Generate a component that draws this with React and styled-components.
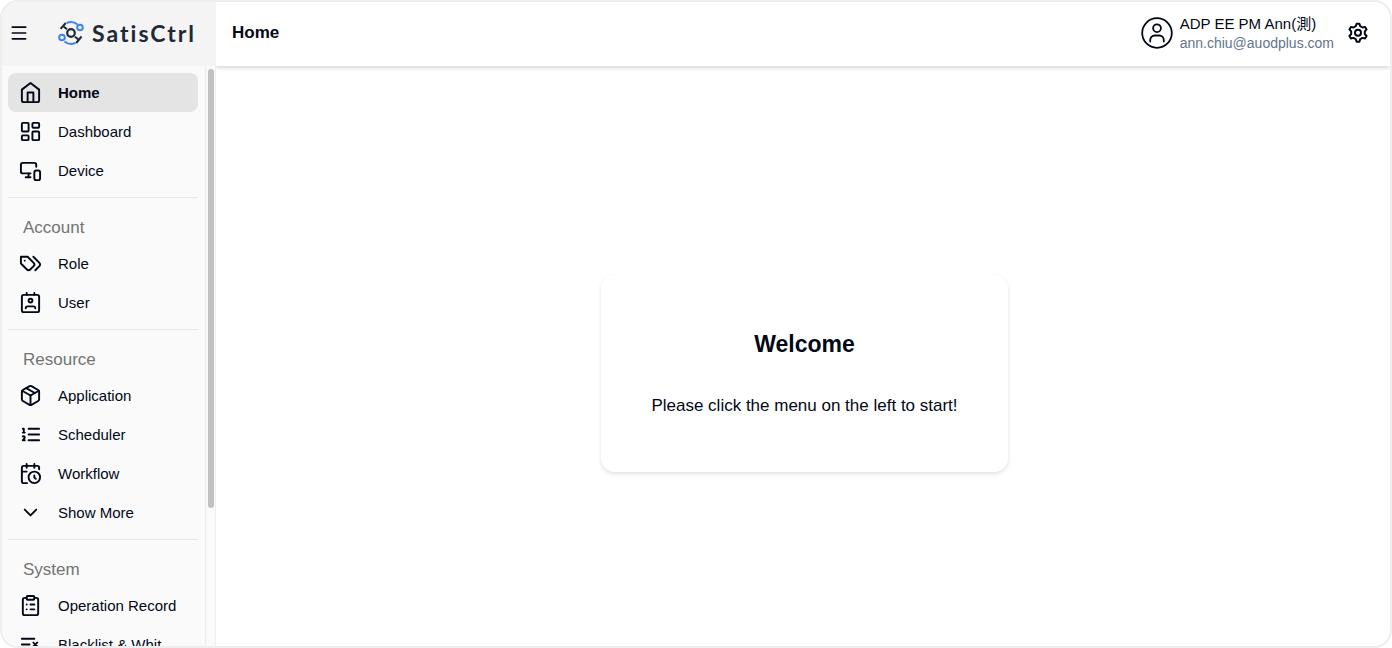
import React from 'react';
import styled, { createGlobalStyle } from 'styled-components';
import {
    LayoutDashboard, MonitorSmartphone, ChevronDown, ClipboardList, Menu, Package,
} from 'lucide-react';

// icon drawings that are not in the package in this shape
const Svg = ({ size = 23, children }) => (
    <svg width={size} height={size} viewBox="0 0 24 24" fill="none" stroke="currentColor" strokeWidth="2" strokeLinecap="round" strokeLinejoin="round" aria-hidden="true">
        {children}
    </svg>
)

const HomeIcon = () => (
    <Svg>
        <path d="m3 9 9-7 9 7v11a2 2 0 0 1-2 2H5a2 2 0 0 1-2-2z" />
        <path d="M9 22V12h6v10" />
    </Svg>
)

const TagsIcon = () => (
    <Svg>
        <path d="M9 5H2v7l6.290 6.290c.94.94 2.480.94 3.420 0l3.580-3.580c.94-.94.94-2.480 0-3.420L9 5Z" />
        <path d="M6 9.010V9M15 5l6.300 6.300a2.400 2.400 0 0 1 0 3.400L17 19" />
    </Svg>
)

const ContactIcon = () => (
    <Svg>
        <path d="M17 18a2 2 0 0 0-2-2H9a2 2 0 0 0-2 2M8 2v2M16 2v2" />
        <rect x="3" y="4" width="18" height="18" rx="2" />
        <circle cx="12" cy="10" r="2" />
    </Svg>
)

const OrderedIcon = () => (
    <Svg>
        <path d="M10 6h11M10 12h11M10 18h11M4 6h1v4M4 10h2M6 18H4c0-1 2-2 2-3s-1-1.500-2-1" />
    </Svg>
)

const CalendarClockIcon = () => (
    <Svg>
        <path d="M21 7.500V6a2 2 0 0 0-2-2H5a2 2 0 0 0-2 2v14a2 2 0 0 0 2 2h3.500" />
        <path d="M16 2v4M8 2v4M3 10h5M17.500 17.500 16 16.250V14" />
        <circle cx="16" cy="16" r="6" />
    </Svg>
)

const ListXIcon = () => (
    <Svg>
        <path d="M11 12H3M16 6H3M16 18H3M19 10l-4 4M15 10l4 4" />
    </Svg>
)

const GearIcon = () => (
    <Svg size={24}>
        <path d="M9.800 5.200 10.600 2.700h2.800l.8 2.500 2.300 1.300 2.600-.6 1.500 2.500-1.800 2v2.600l1.800 2-1.500 2.500-2.600-.6-2.300 1.300-.8 2.500h-2.800l-.8-2.500-2.300-1.300-2.600.6L3.400 15l1.800-2v-2.600l-1.800-2 1.500-2.500 2.600.6z" />
        <circle cx="12" cy="11.700" r="3" />
    </Svg>
)

const AvatarIcon = () => (
    <svg width="32" height="32" viewBox="0 0 32 32" fill="none" stroke="currentColor" strokeWidth="1.800" strokeLinecap="round" aria-hidden="true">
        <circle cx="16" cy="16" r="14.800" />
        <circle cx="16" cy="11.200" r="3.900" />
        <path d="M9.200 24.500v-1.500a4.500 4.500 0 0 1 4.500-4.500h4.600a4.500 4.500 0 0 1 4.500 4.500v1.500" />
    </svg>
)

const LogoMark = () => (
    <svg width="28" height="26" viewBox="0 0 28 26" fill="none" strokeWidth="2" aria-hidden="true">
        <g stroke="#3b82f6">
            <path d="M9.500 3.200C13 1.600 17.500 2 20.500 4.500" />
            <circle cx="23" cy="7.500" r="2.800" />
            <path d="M18.500 22.800C15 24.400 10.500 24 7.500 21.500" />
            <circle cx="5" cy="17.500" r="2.800" />
        </g>
        <g stroke="#1f2937">
            <circle cx="14" cy="13" r="3.800" strokeWidth="2.200" />
            <path d="M3.500 8.800 8.800 3M6 6l4 3.200M24.500 16.500 19.200 23M22 20l-4-3.200" />
        </g>
    </svg>
)

const groups = [
    {
        items: [
            { label: 'Home', icon: HomeIcon, active: true },
            { label: 'Dashboard', icon: LayoutDashboard },
            { label: 'Device', icon: MonitorSmartphone },
        ],
    },
    {
        title: 'Account',
        items: [
            { label: 'Role', icon: TagsIcon },
            { label: 'User', icon: ContactIcon },
        ],
    },
    {
        title: 'Resource',
        items: [
            { label: 'Application', icon: Package },
            { label: 'Scheduler', icon: OrderedIcon },
            { label: 'Workflow', icon: CalendarClockIcon },
            { label: 'Show More', icon: ChevronDown, more: true },
        ],
    },
    {
        title: 'System',
        items: [
            { label: 'Operation Record', icon: ClipboardList },
            { label: 'Blacklist & Whit...', icon: ListXIcon },
        ],
    },
]

function Sidebar() {
    return (
        <SideColumn>
            <Brand>
                <IconButton type="button" aria-label="Toggle menu"><Menu size={20} /></IconButton>
                <LogoLink href="#home">
                    <LogoMark />
                    <LogoText>SatisCtrl</LogoText>
                </LogoLink>
            </Brand>
            <SideBody>
                <Nav>
                    {groups.map((group, i) => (
                        <Group key={i}>
                            {group.title && <GroupTitle>{group.title}</GroupTitle>}
                            {group.items.map(({ label, icon: Icon, active, more }) => (
                                <NavItem key={label} as={more ? 'button' : 'a'} href={more ? undefined : '#' + label} $active={active}>
                                    <Icon size={23} />
                                    <span>{label}</span>
                                </NavItem>
                            ))}
                        </Group>
                    ))}
                </Nav>
                <Track><Thumb /></Track>
            </SideBody>
        </SideColumn>
    )
}

export default function App() {
    return (
        <>
            <GlobalStyle />
            <Frame>
                <Sidebar />
                <Content>
                    <TopBar>
                        <PageTitle>Home</PageTitle>
                        <Account>
                            <AvatarIcon />
                            <div>
                                <UserName>ADP EE PM Ann(測)</UserName>
                                <UserMail>ann.chiu@auodplus.com</UserMail>
                            </div>
                            <IconButton type="button" aria-label="Settings"><GearIcon /></IconButton>
                        </Account>
                    </TopBar>
                    <Main>
                        <Card>
                            <CardTitle>Welcome</CardTitle>
                            <CardText>Please click the menu on the left to start!</CardText>
                        </Card>
                    </Main>
                </Content>
            </Frame>
        </>
    )
}

const GlobalStyle = createGlobalStyle`
    *{
        box-sizing: border-box;
    }
    body{
        margin:0;
        background:#fff;
        color:#020817;
        font-family: "Liberation Sans", Arial, "Noto Sans CJK TC", sans-serif;
    }
    h1,h2,h3,p{
        margin:0;
    }
`;

const Frame = styled.div`
    display: flex;
    height:100vh;
    border:2px solid #eee;
    border-radius:18px;
    overflow: hidden;
`;

const SideColumn = styled.aside`
    position: relative;
    z-index:1;
    width:214px;
    flex-shrink: 0;
    display: flex;
    flex-direction: column;
    background: #fafafa;
`;

const Brand = styled.div`
    height:64px;
    flex-shrink: 0;
    display: flex;
    align-items: center;
    gap:28px;
    padding:0 7px 2px;
    background: #f4f4f4;
`;

const IconButton = styled.button`
    display: flex;
    padding:0;
    border:none;
    background: none;
    color:inherit;
    cursor: pointer;
`;

const LogoLink = styled.a`
    display: flex;
    align-items: center;
    gap:7px;
    color:#1f2937;
    text-decoration: none;
`;

const LogoText = styled.span`
    font-family: Lato, sans-serif;
    font-size:23px;
    line-height:28px;
    font-weight:700;
    letter-spacing:2px;
`;

const SideBody = styled.div`
    flex:1;
    min-height:0;
    display: flex;
`;

const Nav = styled.nav`
    flex:1;
    min-width:0;
    padding:7px 7px 0 6px;
    overflow: hidden;
    border-right:1px solid #eee;
`;

const Group = styled.div`
    & + &{
        margin-top:7px;
        border-top:1px solid #e2e8f0;
    }
`;

const GroupTitle = styled.h2`
    padding:18px 15px 4px;
    font-size:17px;
    line-height:24px;
    font-weight:400;
    color:#737373;
`;

const NavItem = styled.a`
    display: flex;
    align-items: center;
    gap:16px;
    width:100%;
    height:39px;
    padding:0 11px;
    border:none;
    border-radius:8px;
    background: ${({ $active }) => $active ? '#e4e4e4' : 'transparent'};
    color:inherit;
    font-family: inherit;
    font-size:15px;
    font-weight:${({ $active }) => $active ? 700 : 400};
    text-decoration: none;
    white-space: nowrap;
    cursor: pointer;
`;

const Track = styled.div`
    width:10px;
    padding:3px 1px 0 2px;
    border-right:1px solid #eee;
`;

const Thumb = styled.div`
    height:76%;
    border-radius:3px;
    background: #c1c1c1;
`;

const Content = styled.div`
    flex:1;
    min-width:0;
    display: flex;
    flex-direction: column;
`;

const TopBar = styled.header`
    height:64px;
    flex-shrink: 0;
    display: flex;
    align-items: center;
    justify-content: space-between;
    padding:0 20px 2px 16px;
    box-shadow: 0 2px 4px rgba(0,0,0,0.16);
`;

const PageTitle = styled.h1`
    font-size:17px;
    line-height:24px;
    font-weight:700;
`;

const Account = styled.div`
    display: flex;
    align-items: center;
    gap:7px;
    ${IconButton}{
        margin-left:5px;
    }
`;

const UserName = styled.p`
    font-size:15px;
    line-height:20px;
`;

const UserMail = styled.p`
    font-size:14px;
    line-height:18px;
    color:#64748b;
`;

const Main = styled.main`
    flex:1;
    display: flex;
    align-items: center;
    justify-content: center;
    padding:34px 0 0 3px;
`;

const Card = styled.section`
    padding:53px 50px 52px;
    border-radius:14px;
    background: #fff;
    text-align: center;
    box-shadow: 0 2px 4px rgba(0,0,0,0.12);
`;

const CardTitle = styled.h2`
    margin-bottom:32px;
    font-size:23px;
    line-height:32px;
    font-weight:700;
`;

const CardText = styled.p`
    font-size:17px;
    line-height:28px;
`;
